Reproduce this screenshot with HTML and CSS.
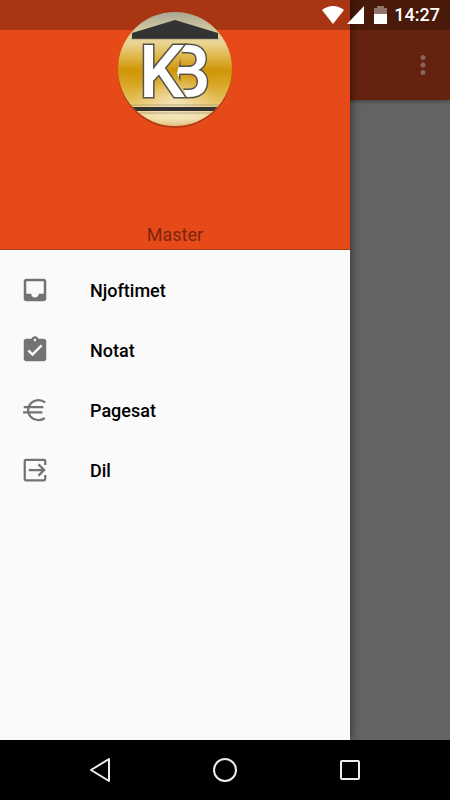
FILE: index.html
```html
<!DOCTYPE html>
<html lang="sq">
<head>
  <meta charset="UTF-8">
  <meta name="viewport" content="width=device-width, initial-scale=1.0">
  <title>Njoftimet</title>
  <link rel="stylesheet" href="styles.css">
</head>
<body>
  <div class="screen">
    <header class="toolbar">
      <button class="more" aria-label="Menu">
        <svg width="30" height="30" viewBox="0 0 24 24"><path d="M12 8c1.100 0 2-.9 2-2s-.9-2-2-2-2 .9-2 2 .9 2 2 2zm0 2c-1.100 0-2 .9-2 2s.9 2 2 2 2-.9 2-2-.9-2-2-2zm0 6c-1.100 0-2 .9-2 2s.9 2 2 2 2-.9 2-2-.9-2-2-2z"/></svg>
      </button>
    </header>

    <aside class="drawer">
      <div class="profile">
        <svg class="logo" width="116" height="118" viewBox="0 0 116 118" role="img" aria-label="KB">
          <defs>
            <linearGradient id="gold" x1="0" y1="0" x2="0" y2="1">
              <stop offset="0" stop-color="#a7a491"/>
              <stop offset=".15" stop-color="#cfc6a0"/>
              <stop offset=".27" stop-color="#ead696"/>
              <stop offset=".4" stop-color="#dfb545"/>
              <stop offset=".51" stop-color="#d09508"/>
              <stop offset=".64" stop-color="#d9a827"/>
              <stop offset=".8" stop-color="#e8c568"/>
              <stop offset=".92" stop-color="#f0dda4"/>
              <stop offset="1" stop-color="#d9b767"/>
            </linearGradient>
            <radialGradient id="shine">
              <stop offset="0" stop-color="#fff" stop-opacity=".55"/>
              <stop offset="1" stop-color="#fff" stop-opacity="0"/>
            </radialGradient>
            <clipPath id="disc"><circle cx="58" cy="58" r="57"/></clipPath>
            <clipPath id="bowls"><path d="M68 30h36v62H72L60 62z"/></clipPath>
          </defs>
          <circle cx="58" cy="60" r="57" fill="#7b2b0c" opacity=".45"/>
          <g clip-path="url(#disc)">
            <rect width="116" height="116" fill="url(#gold)"/>
            <ellipse cx="58" cy="91" rx="42" ry="30" fill="url(#shine)"/>
            <path d="M15 22L58 9l43 13v6H15z" fill="#333"/>
            <path d="M14 96h88v4H14z" fill="#333"/>
            <path d="M14 28h88M14 94h88M14 102h88" stroke="#8e8870" opacity=".6"/>
          </g>
          <g class="logo-text">
            <text x="48" y="86" clip-path="url(#bowls)">B</text>
            <text x="22" y="86">K</text>
          </g>
        </svg>
        <p class="name">Master</p>
      </div>
      <nav class="menu">
        <a href="#njoftimet">
          <svg width="30" height="30" viewBox="0 0 24 24"><path d="M19 3H5c-1.100 0-2 .9-2 2v14c0 1.100.9 2 2 2h14c1.100 0 2-.9 2-2V5c0-1.100-.9-2-2-2zm0 12h-4c0 1.660-1.340 3-3 3s-3-1.340-3-3H5V5h14v10z"/></svg>
          Njoftimet
        </a>
        <a href="#notat">
          <svg width="30" height="30" viewBox="0 0 24 24"><path d="M19 3h-4.180C14.400 1.840 13.300 1 12 1c-1.300 0-2.400.84-2.820 2H5c-1.100 0-2 .9-2 2v14c0 1.100.9 2 2 2h14c1.100 0 2-.9 2-2V5c0-1.100-.9-2-2-2zm-7 0c.55 0 1 .45 1 1s-.45 1-1 1-1-.45-1-1 .45-1 1-1zm-2 14l-4-4 1.410-1.410L10 14.170l6.590-6.590L18 9l-8 8z"/></svg>
          Notat
        </a>
        <a href="#pagesat">
          <svg width="30" height="30" viewBox="0 0 24 24"><path class="line" d="M20.200 6A8.300 8 0 1 0 19.800 18.400M3 9.700h15.700M2.500 13.800h15.400"/></svg>
          Pagesat
        </a>
        <a href="#dil">
          <svg width="30" height="30" viewBox="0 0 24 24"><path class="line" d="M20.200 8V4.800Q20.200 3.800 19.200 3.800H4.800Q3.800 3.800 3.800 4.800V19.200Q3.800 20.200 4.800 20.200H19.200Q20.200 20.200 20.200 19.200V16M7 12h12M14.800 7.500l4.500 4.500-4.500 4.500"/></svg>
          Dil
        </a>
      </nav>
    </aside>

    <div class="status">
      <svg width="70" height="30" viewBox="0 0 70 30">
        <path d="M2 10Q13 2 24 10L13 24z"/>
        <path d="M44 6v18H27z"/>
        <path d="M54 8h3V6h7v2h3v6H54z" opacity=".4"/>
        <path d="M54 14h13v10H54z"/>
      </svg>
      <time>14:27</time>
    </div>
  </div>

  <footer class="navbar">
    <button aria-label="Back"><svg width="30" height="30" viewBox="0 0 30 30"><path d="M24 4v22L6 15z"/></svg></button>
    <button aria-label="Home"><svg width="30" height="30" viewBox="0 0 30 30"><circle cx="15" cy="15" r="11"/></svg></button>
    <button aria-label="Recent"><svg width="30" height="30" viewBox="0 0 30 30"><rect x="6" y="6" width="18" height="18" rx="1"/></svg></button>
  </footer>
</body>
</html>
```
FILE: styles.css
```css
* {
  box-sizing: border-box;
}

body {
  display: flex;
  flex-direction: column;
  min-height: 100vh;
  margin: 0;
  font-family: Roboto, sans-serif;
  font-size: 18px;
}

button {
  display: flex;
  padding: 0;
  border: 0;
  background: none;
}

.screen {
  position: relative;
  flex: 1;
  overflow: hidden;
  background: #646464;
}

.toolbar {
  display: flex;
  justify-content: flex-end;
  height: 100px;
  padding: 50px 12px 0 0;
  background: #65230f;
  box-shadow: 0 1px 4px rgba(0, 0, 0, 0.4);
}

.more {
  height: 30px;
  fill: #85695f;
}

/* drawer slides over the page */
.drawer {
  position: absolute;
  top: 0;
  bottom: 0;
  left: 0;
  width: calc(100% - 100px);
  background: #fafafa;
  box-shadow: 0 0 10px rgba(0, 0, 0, 0.6);
}

.profile {
  display: flex;
  flex-direction: column;
  align-items: center;
  justify-content: space-between;
  height: 250px;
  padding-top: 11px;
  padding-bottom: 3px;
  background: #e64a19;
  border-bottom: 1px solid #ac3c17;
}

/* the logo stays on top of the status bar shade */
.logo {
  position: relative;
  z-index: 2;
}

.logo-text {
  font-family: Roboto, sans-serif;
  font-size: 72px;
  font-weight: 500;
  fill: #fff;
  stroke: #55524a;
  stroke-width: 3px;
  paint-order: stroke;
}

.name {
  margin: 0;
  line-height: 22px;
  color: #7c260d;
}

.menu {
  display: flex;
  flex-direction: column;
  padding-top: 10px;
}

.menu a {
  display: flex;
  align-items: center;
  gap: 40px;
  height: 60px;
  padding-left: 20px;
  font-weight: 500;
  color: #000;
  text-decoration: none;
}

.menu svg {
  fill: #737373;
}

.menu .line {
  fill: none;
  stroke: #737373;
  stroke-width: 1.8;
}

.status {
  position: absolute;
  top: 0;
  left: 0;
  right: 0;
  z-index: 1;
  display: flex;
  align-items: center;
  justify-content: flex-end;
  gap: 4px;
  height: 30px;
  padding-right: 10px;
  background: rgba(0, 0, 0, 0.27);
  color: #fff;
  font-weight: 500;
  line-height: 32px;
}

.status svg {
  fill: #fff;
}

.navbar {
  display: flex;
  justify-content: center;
  align-items: center;
  gap: 95px;
  height: 60px;
  background: #000;
}

.navbar svg {
  fill: none;
  stroke: #eee;
  stroke-width: 2;
  stroke-linejoin: round;
}
```
